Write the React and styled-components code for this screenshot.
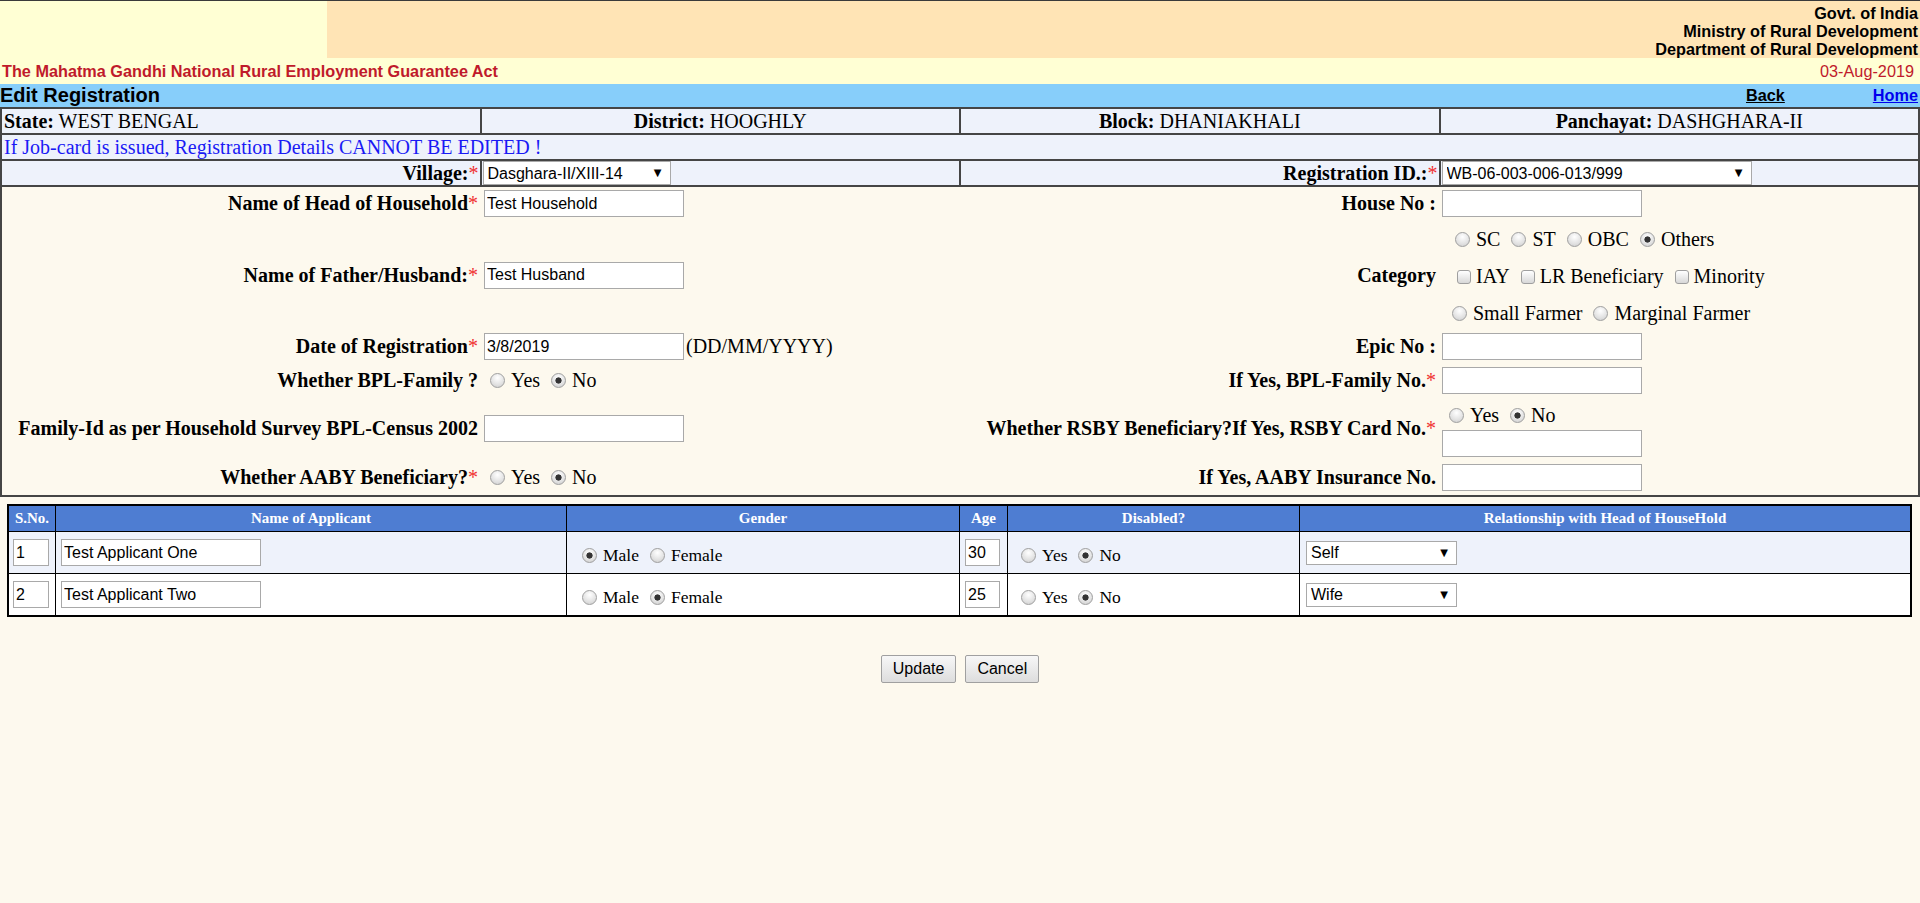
import React from "react";
import styled, { createGlobalStyle } from "styled-components";

const GlobalStyle = createGlobalStyle`
  html, body { margin: 0; padding: 0; }
  body {
    background: #fdf9ee;
    color: #000;
    font-family: "Liberation Serif", "Times New Roman", serif;
  }
  *, *::before, *::after { box-sizing: border-box; }
`;

const SANS = `"Liberation Sans", Arial, sans-serif`;

/* ---------- masthead ---------- */
const Masthead = styled.header`
  display: grid;
  grid-template-columns: 327px 1fr;
  height: 58px;
  border-top: 1px solid #3a3a3a;
  background: #ffffd4;
`;

const Emblem = styled.div`
  background: #ffffd4;
`;

const Ministry = styled.div`
  background: #ffe4b5;
  text-align: right;
  padding: 3px 2px 0 0;
  font: bold 16.25px/18px ${SANS};
`;

const ActBar = styled.div`
  display: flex;
  justify-content: space-between;
  align-items: center;
  height: 26px;
  padding: 0 6px 0 2px;
  background: #ffffd4;
  color: #c01a2b;
  font: 16.25px ${SANS};
`;

const ActName = styled.span`
  font-weight: bold;
`;

const PageBar = styled.div`
  display: flex;
  align-items: center;
  height: 23px;
  padding-right: 2px;
  background: #87cefa;
  font-family: ${SANS};
`;

const PageTitle = styled.h1`
  flex: 1;
  margin: 0;
  font-size: 20px;
  line-height: 23px;
  font-weight: bold;
`;

const NavLink = styled.a`
  font-size: 16.25px;
  font-weight: bold;
  text-decoration: underline;
  color: ${(p) => (p.$tone === "blue" ? "#0000ee" : "#000")};
  margin-right: ${(p) => p.$gap || 0}px;
  cursor: pointer;
`;

/* ---------- location block ---------- */
const InfoGrid = styled.div`
  display: grid;
  grid-template-columns: repeat(4, 1fr);
  gap: 2px;
  padding: 2px;
  background: #454545;
`;

const InfoCell = styled.div`
  grid-column: ${(p) => (p.$span ? `span ${p.$span}` : "auto")};
  height: 24px;
  line-height: 24px;
  padding: 0 ${(p) => p.$padR ?? 2}px 0 ${(p) => p.$padL ?? 2}px;
  background: #eef2fb;
  font-size: 20px;
  white-space: nowrap;
  text-align: ${(p) => p.$align || "left"};
  color: ${(p) => (p.$notice ? "#1a1af5" : "#000")};
`;

const Req = styled.span`
  color: #f03030;
  font-weight: normal;
`;

/* ---------- household form ---------- */
const FormPanel = styled.div`
  display: grid;
  grid-template-columns: repeat(4, 1fr);
  grid-template-rows: 33px 110px 33px 34px 63px 35px;
  border: 2px solid #454545;
  border-top: 0;
  background: #fdf9ee;
`;

const FieldLabel = styled.div`
  display: flex;
  align-items: center;
  justify-content: flex-end;
  padding-right: 3px;
  font-size: 20px;
  font-weight: bold;
  white-space: nowrap;
`;

const FieldValue = styled.div`
  display: flex;
  flex-direction: ${(p) => (p.$stack ? "column" : "row")};
  justify-content: ${(p) => (p.$stack ? "center" : "flex-start")};
  align-items: ${(p) => (p.$stack ? "flex-start" : "center")};
  padding-left: 3px;
  font-size: 20px;
  white-space: nowrap;
`;

const OptionLine = styled.div`
  display: flex;
  align-items: center;
  height: ${(p) => p.$h || 30}px;
  padding-left: ${(p) => p.$indent || 0}px;
  padding-top: ${(p) => p.$drop || 0}px;
`;

const Hint = styled.span`
  margin-left: 2px;
  font-size: 20px;
`;

const TextBox = styled.input`
  width: ${(p) => p.$w || 200}px;
  height: 27px;
  padding: 0 2px;
  border: 1px solid #a9a9a9;
  border-radius: 0;
  background: #fff;
  color: #000;
  font: 16px ${SANS};
  outline: none;
`;

const OptionLabel = styled.label`
  display: inline-flex;
  align-items: center;
  margin-right: 11px;
  font-size: ${(p) => p.$size || 20}px;
  white-space: nowrap;
`;

const RadioMark = styled.input.attrs({ type: "radio" })`
  appearance: none;
  flex: none;
  width: 15px;
  height: 15px;
  margin: 0 6px 0 0;
  border: 1px solid #9f9f9f;
  border-radius: 50%;
  background: radial-gradient(circle at 50% 30%, #ffffff 0%, #e2e2e2 60%, #cacaca 100%);
  &:checked {
    background: radial-gradient(circle, #333 0 2.8px, transparent 3.4px),
      radial-gradient(circle at 50% 30%, #ffffff 0%, #e2e2e2 60%, #cacaca 100%);
  }
`;

const CheckMark = styled.input.attrs({ type: "checkbox" })`
  appearance: none;
  flex: none;
  width: 14px;
  height: 14px;
  margin: 0 5px 0 0;
  border: 1px solid #9f9f9f;
  border-radius: 3px;
  background: linear-gradient(#ffffff, #d8d8d8);
`;

const SelectWrap = styled.span`
  position: relative;
  display: inline-block;
  vertical-align: top;
  line-height: 0;
`;

const Dropdown = styled.select`
  appearance: none;
  width: ${(p) => p.$w}px;
  height: 24px;
  padding: 0 22px 0 4px;
  border: 1px solid #a9a9a9;
  border-radius: 0;
  background: #fff;
  color: #000;
  font: 16px ${SANS};
`;

const Caret = styled.span`
  position: absolute;
  right: 9px;
  top: 50%;
  transform: translateY(-50%);
  font: 10px/1 "DejaVu Sans", sans-serif;
  color: #000;
  pointer-events: none;
`;

/* ---------- applicants ---------- */
const ApplicantGrid = styled.div`
  display: grid;
  grid-template-columns: 46px 510px 392px 47px 291px 1fr;
  gap: 1px;
  margin: 7px 8px 0 7px;
  border: 1px solid #000;
  padding: 1px;
  background: #000;
`;

const HeadCell = styled.div`
  height: 25px;
  line-height: 25px;
  background: #4e7dd2;
  color: #fff;
  font-size: 15px;
  font-weight: bold;
  text-align: center;
  white-space: nowrap;
`;

const BodyCell = styled.div`
  display: flex;
  align-items: center;
  height: 41px;
  padding-left: ${(p) => p.$pad || 5}px;
  background: ${(p) => (p.$alt ? "#eef2fb" : "#fff")};
  font-size: 17.5px;
`;

const RadioRow = styled.div`
  display: flex;
  align-items: center;
  padding-top: 6px;
`;

/* ---------- actions ---------- */
const ActionBar = styled.div`
  display: flex;
  justify-content: center;
  gap: 9px;
  margin-top: 38px;
`;

const ActionButton = styled.button`
  height: 28px;
  padding: 0 11px;
  border: 1px solid #a0a0a0;
  border-radius: 2px;
  background: linear-gradient(#f7f7f7, #dddddd);
  color: #000;
  font: 16px ${SANS};
`;

const applicants = [
  { no: "1", name: "Test Applicant One", gender: "Male", age: "30", disabled: "No", relation: "Self" },
  { no: "2", name: "Test Applicant Two", gender: "Female", age: "25", disabled: "No", relation: "Wife" },
];

function Choice({ kind = "radio", name, label, checked, size }) {
  return (
    <OptionLabel $size={size}>
      {kind === "radio" ? (
        <RadioMark name={name} defaultChecked={checked} />
      ) : (
        <CheckMark defaultChecked={checked} />
      )}
      {label}
    </OptionLabel>
  );
}

function Select({ width, value, options }) {
  return (
    <SelectWrap>
      <Dropdown $w={width} defaultValue={value}>
        {options.map((o) => (
          <option key={o}>{o}</option>
        ))}
      </Dropdown>
      <Caret>▼</Caret>
    </SelectWrap>
  );
}

function YesNo({ name, value, size, indent }) {
  return (
    <OptionLine $indent={indent}>
      <Choice name={name} label="Yes" checked={value === "Yes"} size={size} />
      <Choice name={name} label="No" checked={value === "No"} size={size} />
    </OptionLine>
  );
}

export default function App() {
  return (
    <>
      <GlobalStyle />
      <Masthead>
        <Emblem />
        <Ministry>
          <div>Govt. of India</div>
          <div>Ministry of Rural Development</div>
          <div>Department of Rural Development</div>
        </Ministry>
      </Masthead>
      <ActBar>
        <ActName>The Mahatma Gandhi National Rural Employment Guarantee Act</ActName>
        <span>03-Aug-2019</span>
      </ActBar>
      <PageBar>
        <PageTitle>Edit Registration</PageTitle>
        <NavLink $gap={88}>Back</NavLink>
        <NavLink $tone="blue">Home</NavLink>
      </PageBar>

      <InfoGrid>
        <InfoCell>
          <b>State:</b> WEST BENGAL
        </InfoCell>
        <InfoCell $align="center">
          <b>District:</b> HOOGHLY
        </InfoCell>
        <InfoCell $align="center">
          <b>Block:</b> DHANIAKHALI
        </InfoCell>
        <InfoCell $align="center">
          <b>Panchayat:</b> DASHGHARA-II
        </InfoCell>
        <InfoCell $span={4} $notice>
          If Job-card is issued, Registration Details CANNOT BE EDITED !
        </InfoCell>
        <InfoCell $align="right" $padR={1}>
          <b>Village:</b>
          <Req>*</Req>
        </InfoCell>
        <InfoCell $padL={1}>
          <Select width={188} value="Dasghara-II/XIII-14" options={["Dasghara-II/XIII-14"]} />
        </InfoCell>
        <InfoCell $align="right" $padR={1}>
          <b>Registration ID.:</b>
          <Req>*</Req>
        </InfoCell>
        <InfoCell $padL={1}>
          <Select width={310} value="WB-06-003-006-013/999" options={["WB-06-003-006-013/999"]} />
        </InfoCell>
      </InfoGrid>

      <FormPanel>
        <FieldLabel>
          Name of Head of Household<Req>*</Req>
        </FieldLabel>
        <FieldValue>
          <TextBox defaultValue="Test Household" />
        </FieldValue>
        <FieldLabel>House No :</FieldLabel>
        <FieldValue>
          <TextBox />
        </FieldValue>

        <FieldLabel>
          Name of Father/Husband:<Req>*</Req>
        </FieldLabel>
        <FieldValue>
          <TextBox defaultValue="Test Husband" />
        </FieldValue>
        <FieldLabel>Category</FieldLabel>
        <FieldValue $stack>
          <OptionLine $h={37} $indent={13} $drop={2}>
            <Choice name="caste" label="SC" />
            <Choice name="caste" label="ST" />
            <Choice name="caste" label="OBC" />
            <Choice name="caste" label="Others" checked />
          </OptionLine>
          <OptionLine $h={37} $indent={15} $drop={2}>
            <Choice kind="check" label="IAY" />
            <Choice kind="check" label="LR Beneficiary" />
            <Choice kind="check" label="Minority" />
          </OptionLine>
          <OptionLine $h={36} $indent={10} $drop={2}>
            <Choice name="farmer" label="Small Farmer" />
            <Choice name="farmer" label="Marginal Farmer" />
          </OptionLine>
        </FieldValue>

        <FieldLabel>
          Date of Registration<Req>*</Req>
        </FieldLabel>
        <FieldValue>
          <TextBox defaultValue="3/8/2019" />
          <Hint>(DD/MM/YYYY)</Hint>
        </FieldValue>
        <FieldLabel>Epic No :</FieldLabel>
        <FieldValue>
          <TextBox />
        </FieldValue>

        <FieldLabel>Whether BPL-Family ?</FieldLabel>
        <FieldValue>
          <YesNo name="bpl" value="No" indent={6} />
        </FieldValue>
        <FieldLabel>
          If Yes, BPL-Family No.<Req>*</Req>
        </FieldLabel>
        <FieldValue>
          <TextBox />
        </FieldValue>

        <FieldLabel>Family-Id as per Household Survey BPL-Census 2002</FieldLabel>
        <FieldValue>
          <TextBox />
        </FieldValue>
        <FieldLabel>
          Whether RSBY Beneficiary?If Yes, RSBY Card No.<Req>*</Req>
        </FieldLabel>
        <FieldValue $stack>
          <YesNo name="rsby" value="No" indent={7} />
          <TextBox />
        </FieldValue>

        <FieldLabel>
          Whether AABY Beneficiary?<Req>*</Req>
        </FieldLabel>
        <FieldValue>
          <YesNo name="aaby" value="No" indent={6} />
        </FieldValue>
        <FieldLabel>If Yes, AABY Insurance No.</FieldLabel>
        <FieldValue>
          <TextBox />
        </FieldValue>
      </FormPanel>

      <ApplicantGrid>
        <HeadCell>S.No.</HeadCell>
        <HeadCell>Name of Applicant</HeadCell>
        <HeadCell>Gender</HeadCell>
        <HeadCell>Age</HeadCell>
        <HeadCell>Disabled?</HeadCell>
        <HeadCell>Relationship with Head of HouseHold</HeadCell>
        {applicants.map((a, i) => {
          const alt = i % 2 === 0;
          return (
            <React.Fragment key={a.no}>
              <BodyCell $alt={alt} $pad={4}>
                <TextBox $w={36} defaultValue={a.no} />
              </BodyCell>
              <BodyCell $alt={alt} $pad={5}>
                <TextBox defaultValue={a.name} />
              </BodyCell>
              <BodyCell $alt={alt} $pad={15}>
                <RadioRow>
                  <Choice name={`gender${a.no}`} label="Male" checked={a.gender === "Male"} size={17.5} />
                  <Choice name={`gender${a.no}`} label="Female" checked={a.gender === "Female"} size={17.5} />
                </RadioRow>
              </BodyCell>
              <BodyCell $alt={alt} $pad={5}>
                <TextBox $w={35} defaultValue={a.age} />
              </BodyCell>
              <BodyCell $alt={alt} $pad={13}>
                <RadioRow>
                  <Choice name={`dis${a.no}`} label="Yes" checked={a.disabled === "Yes"} size={17.5} />
                  <Choice name={`dis${a.no}`} label="No" checked={a.disabled === "No"} size={17.5} />
                </RadioRow>
              </BodyCell>
              <BodyCell $alt={alt} $pad={6}>
                <Select width={151} value={a.relation} options={["Self", "Wife", "Husband", "Son", "Daughter"]} />
              </BodyCell>
            </React.Fragment>
          );
        })}
      </ApplicantGrid>

      <ActionBar>
        <ActionButton>Update</ActionButton>
        <ActionButton>Cancel</ActionButton>
      </ActionBar>
    </>
  );
}
